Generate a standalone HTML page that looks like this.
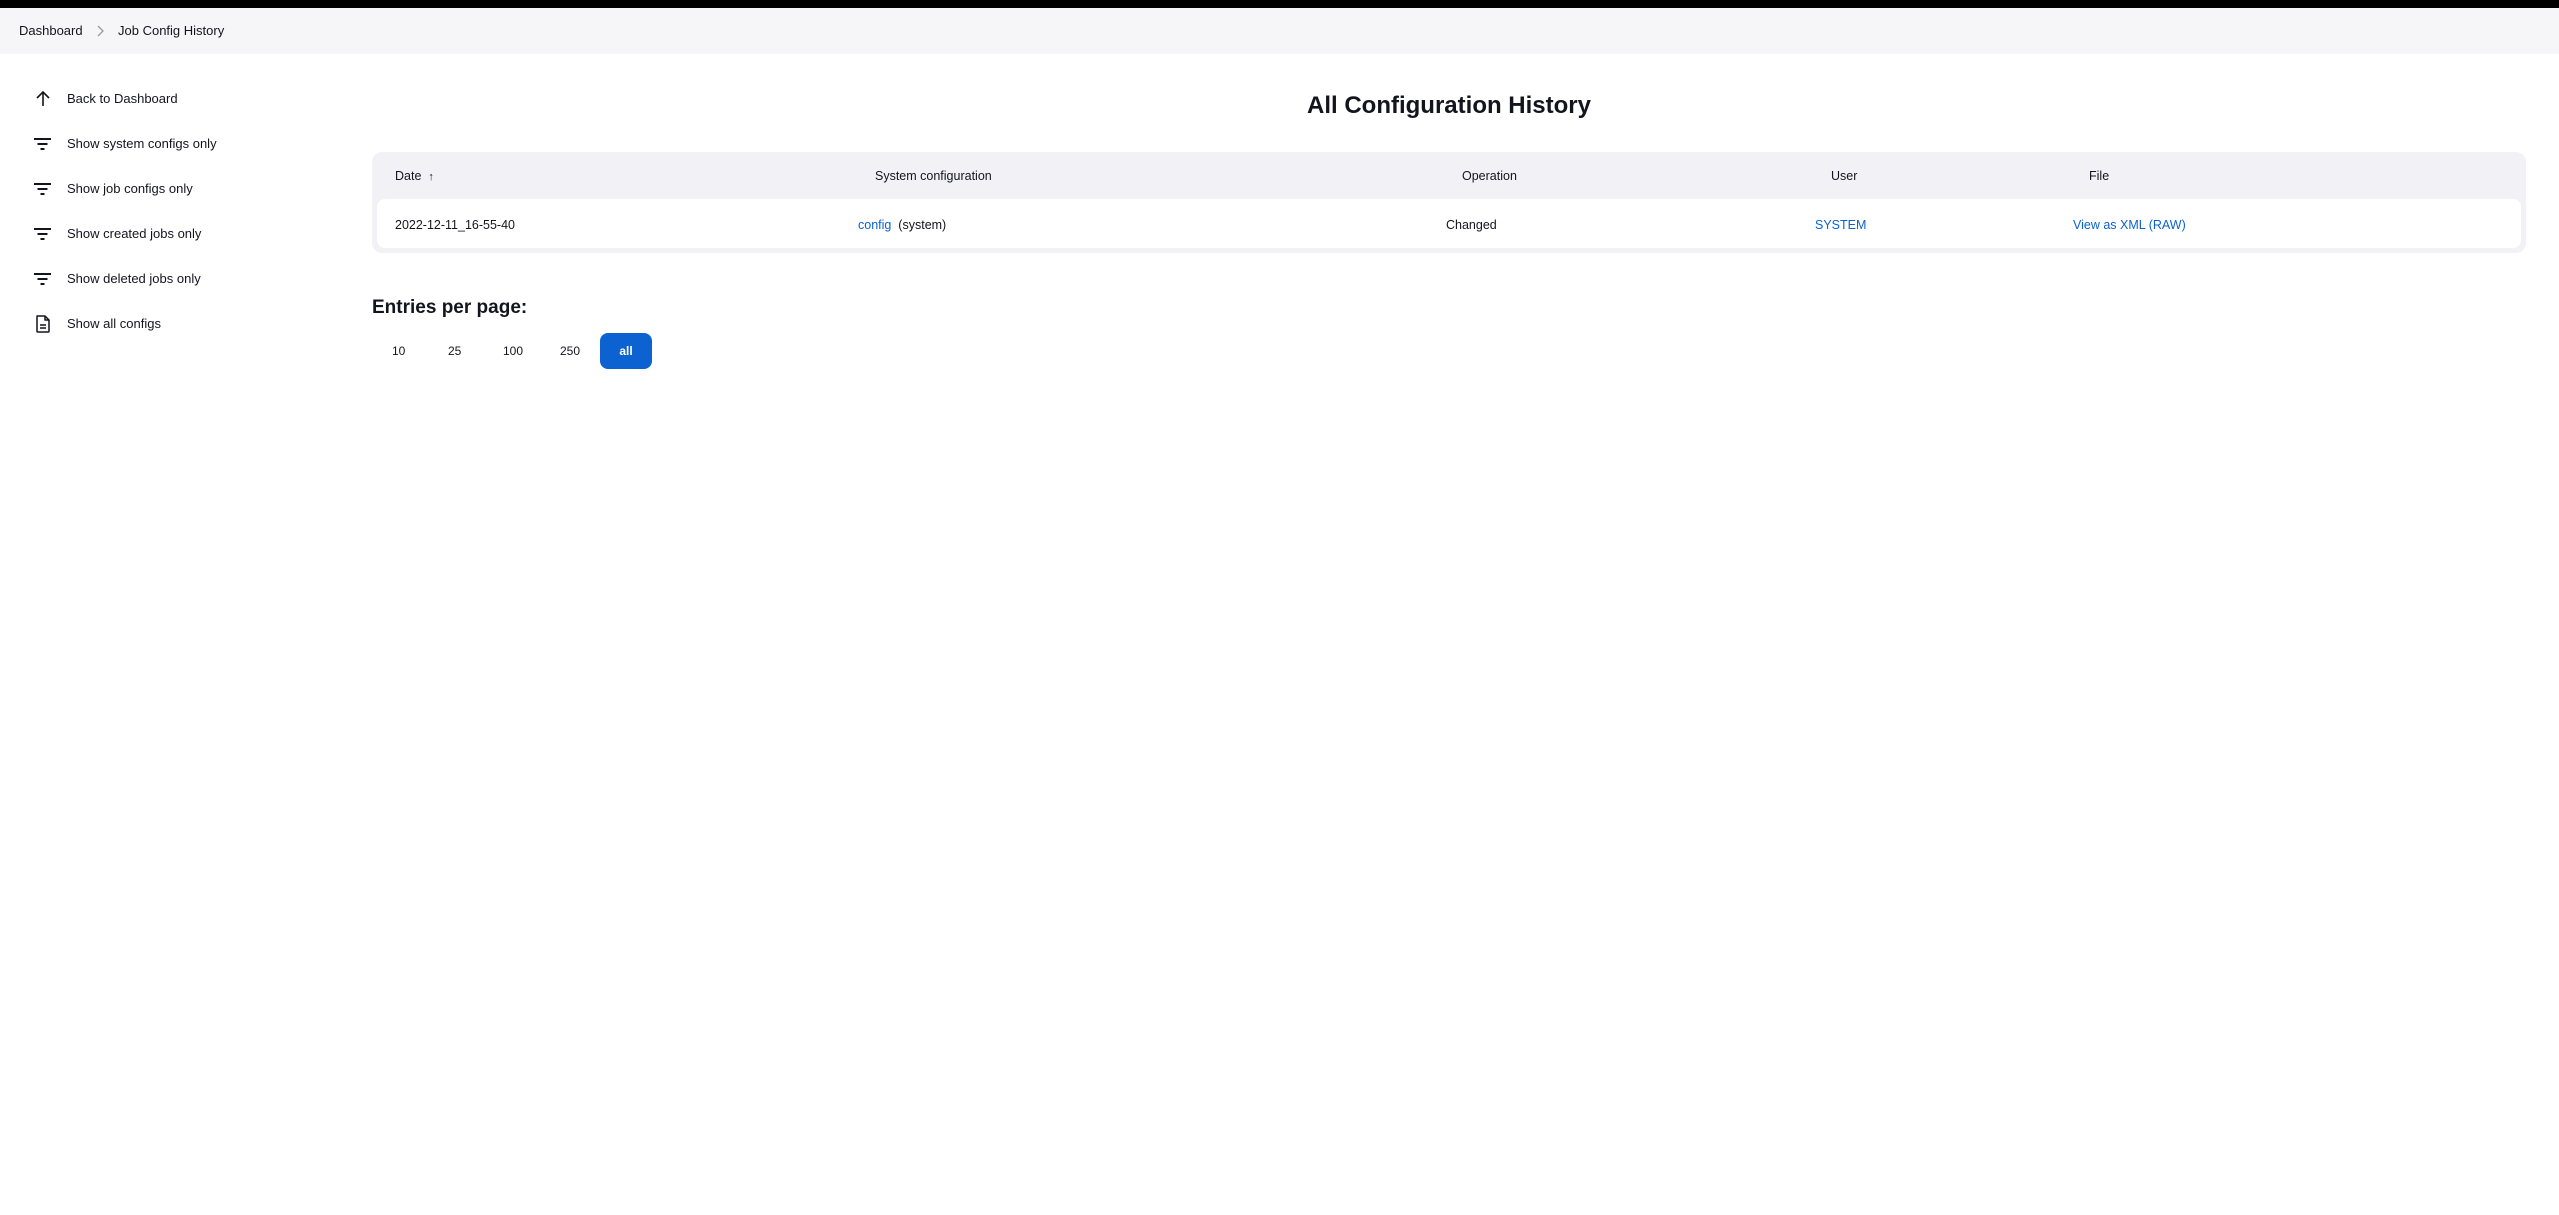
<!DOCTYPE html>
<html><head><meta charset="utf-8"><style>
*{margin:0;padding:0;box-sizing:border-box}
body{width:2559px;height:1215px;background:#fff;font-family:"Liberation Sans",sans-serif;color:#14141f;position:relative;overflow:hidden}
.abs{position:absolute;white-space:nowrap}
.top{position:absolute;left:0;top:0;width:2559px;height:8px;background:#000}
.bc{position:absolute;left:0;top:8px;width:2559px;height:46px;background:#f6f6f8}
.side{font-size:13px;line-height:18px}
.ic{position:absolute;left:33px;width:20px;height:20px}
.t{font-size:12.5px;line-height:16px}
a{color:#0b62d0;text-decoration:none}
</style></head><body>
<div class="top"></div>
<div class="bc"></div>
<div class="abs t" style="left:19px;top:23px;font-size:13px">Dashboard</div>
<svg class="abs" style="left:95px;top:25px" width="10" height="12" viewBox="0 0 10 12"><path d="M3 1l5 5-5 5" fill="none" stroke="#999" stroke-width="1.3"/></svg>
<div class="abs t" style="left:118px;top:23px;font-size:13px">Job Config History</div>

<svg class="ic" style="top:89px" viewBox="0 0 20 20"><path d="M10 17V3M4 9l6-6 6 6" fill="none" stroke="#14141f" stroke-width="1.6"/></svg>
<div class="abs side" style="left:67px;top:90px">Back to Dashboard</div>
<svg class="ic" style="top:134px" viewBox="0 0 20 20"><path d="M1 5h17M4.5 10h10M7.5 15h4" fill="none" stroke="#14141f" stroke-width="2"/></svg>
<div class="abs side" style="left:67px;top:135px">Show system configs only</div>
<svg class="ic" style="top:179px" viewBox="0 0 20 20"><path d="M1 5h17M4.5 10h10M7.5 15h4" fill="none" stroke="#14141f" stroke-width="2"/></svg>
<div class="abs side" style="left:67px;top:180px">Show job configs only</div>
<svg class="ic" style="top:224px" viewBox="0 0 20 20"><path d="M1 5h17M4.5 10h10M7.5 15h4" fill="none" stroke="#14141f" stroke-width="2"/></svg>
<div class="abs side" style="left:67px;top:225px">Show created jobs only</div>
<svg class="ic" style="top:269px" viewBox="0 0 20 20"><path d="M1 5h17M4.5 10h10M7.5 15h4" fill="none" stroke="#14141f" stroke-width="2"/></svg>
<div class="abs side" style="left:67px;top:270px">Show deleted jobs only</div>
<svg class="ic" style="top:314px" viewBox="0 0 20 20"><path d="M4 2h8l4 4v11a1 1 0 0 1-1 1H5a1 1 0 0 1-1-1V3a1 1 0 0 1 1-1zM12 2v4h4M7 11h6M7 14h6" fill="none" stroke="#14141f" stroke-width="1.5" stroke-linejoin="round"/></svg>
<div class="abs side" style="left:67px;top:315px">Show all configs</div>

<div class="abs" style="left:372px;width:2154px;top:91px;text-align:center;font-size:24px;font-weight:bold;line-height:30px">All Configuration History</div>

<div class="abs" style="left:372px;top:152px;width:2154px;height:101px;background:#f2f2f6;border-radius:10px"></div>
<div class="abs" style="left:377px;top:199px;width:2144px;height:49px;background:#fff;border-radius:8px"></div>
<div class="abs t" style="left:395px;top:168px">Date&nbsp;&nbsp;<span style="font-size:11px">↑</span></div>
<div class="abs t" style="left:875px;top:168px">System configuration</div>
<div class="abs t" style="left:1462px;top:168px">Operation</div>
<div class="abs t" style="left:1831px;top:168px">User</div>
<div class="abs t" style="left:2089px;top:168px">File</div>
<div class="abs t" style="left:395px;top:217px">2022-12-11_16-55-40</div>
<div class="abs t" style="left:858px;top:217px"><a>config</a>&nbsp;&nbsp;(system)</div>
<div class="abs t" style="left:1446px;top:217px">Changed</div>
<div class="abs t" style="left:1815px;top:217px"><a>SYSTEM</a></div>
<div class="abs t" style="left:2073px;top:217px"><a>View as XML (RAW)</a></div>

<div class="abs" style="left:372px;top:296px;font-size:19px;font-weight:bold;line-height:24px">Entries per page:</div>
<div class="abs" style="left:392px;top:344px;font-size:12px">10</div>
<div class="abs" style="left:448px;top:344px;font-size:12px">25</div>
<div class="abs" style="left:503px;top:344px;font-size:12px">100</div>
<div class="abs" style="left:560px;top:344px;font-size:12px">250</div>
<div class="abs" style="left:600px;top:333px;width:52px;height:36px;background:#0b62d0;border-radius:8px;color:#fff;font-size:12px;font-weight:bold;text-align:center;line-height:36px">all</div>
</body></html>
